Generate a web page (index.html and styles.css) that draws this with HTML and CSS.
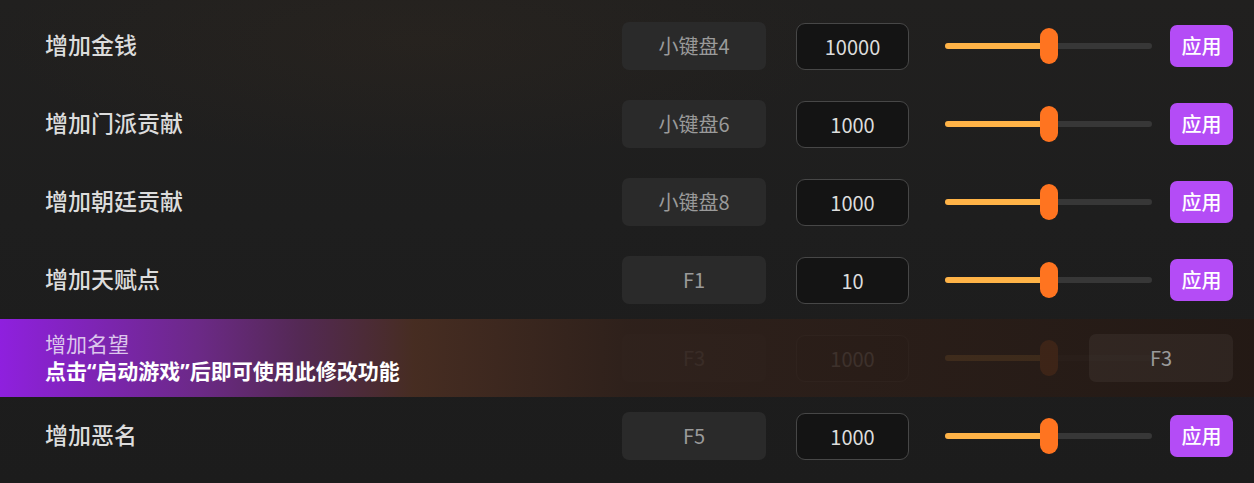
FILE: index.html
```html
<!DOCTYPE html>
<html lang="zh-CN">
<head>
<meta charset="utf-8">
<title>修改器</title>
<link rel="stylesheet" href="styles.css">
</head>
<body>
<div class="list">
  <div class="row">
    <div class="label">增加金钱</div>
    <div class="key">小键盘4</div>
    <div class="input">10000</div>
    <div class="slider"><div class="fill"></div><div class="thumb"></div></div>
    <div class="apply">应用</div>
  </div>
  <div class="row">
    <div class="label">增加门派贡献</div>
    <div class="key">小键盘6</div>
    <div class="input">1000</div>
    <div class="slider"><div class="fill"></div><div class="thumb"></div></div>
    <div class="apply">应用</div>
  </div>
  <div class="row">
    <div class="label">增加朝廷贡献</div>
    <div class="key">小键盘8</div>
    <div class="input">1000</div>
    <div class="slider"><div class="fill"></div><div class="thumb"></div></div>
    <div class="apply">应用</div>
  </div>
  <div class="row">
    <div class="label">增加天赋点</div>
    <div class="key">F1</div>
    <div class="input">10</div>
    <div class="slider"><div class="fill"></div><div class="thumb"></div></div>
    <div class="apply">应用</div>
  </div>
  <div class="row locked">
    <div class="label">增加名望</div>
    <div class="key">F3</div>
    <div class="input">1000</div>
    <div class="slider"><div class="fill"></div><div class="thumb"></div></div>
    <div class="apply">应用</div>
    <div class="mask">
      <div class="mask-text">
        <div class="mask-label">增加名望</div>
        <div class="mask-tip">点击“启动游戏”后即可使用此修改功能</div>
      </div>
      <div class="mask-key">F3</div>
    </div>
  </div>
  <div class="row">
    <div class="label">增加恶名</div>
    <div class="key">F5</div>
    <div class="input">1000</div>
    <div class="slider"><div class="fill"></div><div class="thumb"></div></div>
    <div class="apply">应用</div>
  </div>
</div>
</body>
</html>
```
FILE: styles.css
```css
html, body {
  margin: 0;
  padding: 0;
}
body {
  width: 1254px;
  height: 483px;
  overflow: hidden;
  background:
    radial-gradient(ellipse 420px 120px at 420px 40px, rgba(70, 50, 30, 0.16), rgba(70, 50, 30, 0) 100%),
    linear-gradient(180deg, #21201f 0%, #1e1e1e 45%, #1c1c1c 100%);
  font-family: "Noto Sans CJK SC", "Noto Sans", sans-serif;
  color: #dddddd;
}
.list {
  padding-top: 7px;
  display: flex;
  flex-direction: column;
}
.row {
  position: relative;
  height: 78px;
  display: flex;
  align-items: center;
  padding: 0 21px 0 45px;
}
.label {
  flex: 1;
  font-size: 23px;
  font-weight: 500;
  color: #dcdcdc;
  line-height: 1;
  margin-top: -4px;
}
.key {
  width: 144px;
  height: 48px;
  border-radius: 7px;
  background: #2a2a2a;
  color: #9a9a9a;
  font-size: 20px;
  display: flex;
  align-items: center;
  justify-content: center;
  box-sizing: border-box;
  padding-bottom: 2px;
}
.input {
  margin-left: 30px;
  width: 113px;
  height: 47px;
  box-sizing: border-box;
  border: 1.5px solid #474747;
  border-radius: 9px;
  background: #141414;
  color: #dddddd;
  font-size: 20px;
  display: flex;
  align-items: center;
  justify-content: center;
  padding-top: 1px;
}
.slider {
  position: relative;
  margin-left: 36px;
  width: 207px;
  height: 36px;
  display: flex;
  align-items: center;
}
.slider::before {
  content: "";
  position: absolute;
  left: 0;
  right: 0;
  top: 15px;
  height: 6px;
  border-radius: 3px;
  background: #373737;
}
.fill {
  position: relative;
  width: 104px;
  height: 6px;
  border-radius: 3px;
  background: #ffb347;
}
.thumb {
  position: absolute;
  left: 95px;
  top: 0;
  width: 18px;
  height: 36px;
  border-radius: 9px;
  background: #ff7420;
}
.apply {
  margin-left: 18px;
  width: 63px;
  height: 42px;
  border-radius: 7px;
  background: #b44cf6;
  color: #ffffff;
  font-size: 20px;
  font-weight: 500;
  display: flex;
  align-items: center;
  justify-content: center;
  padding-bottom: 2px;
  box-sizing: border-box;
}
.locked .label,
.locked .apply {
  visibility: hidden;
}
.mask {
  position: absolute;
  left: 0;
  top: 0;
  right: 0;
  bottom: 0;
  display: flex;
  align-items: center;
  justify-content: space-between;
  padding: 0 21px 0 45px;
  background: linear-gradient(90deg,
    rgba(145, 32, 226, 0.98) 0%,
    rgba(112, 42, 140, 0.94) 16%,
    rgba(88, 42, 88, 0.92) 24%,
    rgba(74, 46, 34, 0.92) 33%,
    rgba(48, 33, 27, 0.9) 50%,
    rgba(36, 25, 20, 0.9) 100%);
}
.mask-text {
  display: flex;
  flex-direction: column;
  margin-top: -2px;
}
.mask-label {
  font-size: 21px;
  line-height: 28px;
  color: #dcc6ec;
}
.mask-tip {
  font-family: "Noto Sans", "Noto Sans CJK SC", sans-serif;
  font-size: 21px;
  line-height: 28px;
  font-weight: 700;
  color: #ffffff;
}
.mask-key {
  width: 144px;
  height: 48px;
  border-radius: 7px;
  background: rgba(255, 255, 255, 0.05);
  color: #9a9a9a;
  font-size: 20px;
  display: flex;
  align-items: center;
  justify-content: center;
  padding-bottom: 2px;
  box-sizing: border-box;
}
```
